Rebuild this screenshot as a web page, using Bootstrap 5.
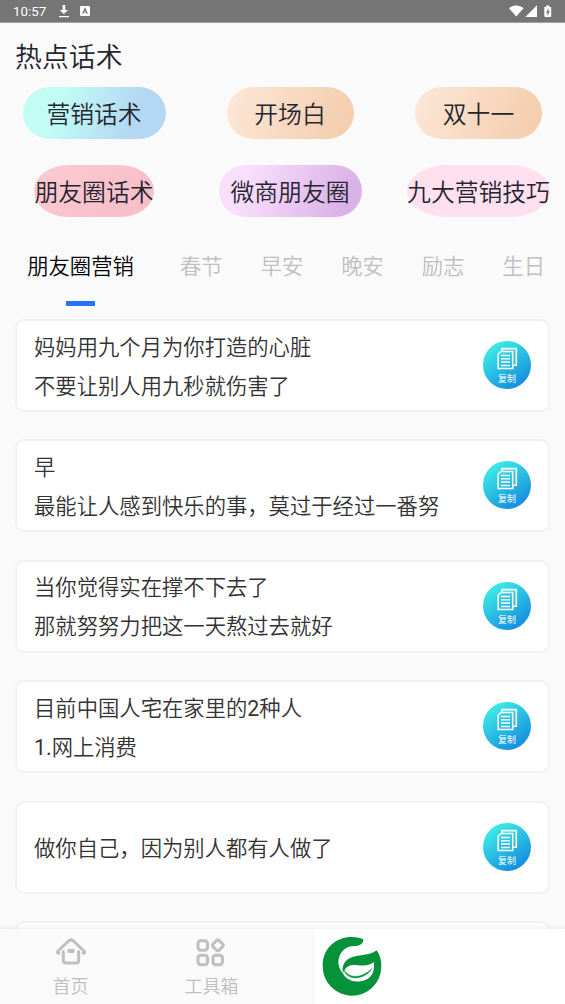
<!DOCTYPE html>
<html lang="zh-CN">
<head>
<meta charset="utf-8">
<meta name="viewport" content="width=device-width, initial-scale=1">
<title>热点话术</title>
<link href="https://cdn.jsdelivr.net/npm/bootstrap@5.3.0/dist/css/bootstrap.min.css" rel="stylesheet">
<style>
body{font-family:Roboto,"Noto Sans CJK SC",sans-serif;font-weight:350;background:#fafafa;color:#24252f}
.phone{height:1004px}
.status{height:23px;background:#757575;border-bottom:1px solid #a2a2a2;color:#fff;font-size:13.3px;font-weight:400;line-height:23px;padding-left:13px;padding-right:12px}
.page-title{font-size:26.9px;font-weight:350;line-height:40px;margin:15px 0 0 15px;height:49px}
.topics{display:grid;grid-template-columns:188px 204px 173px;row-gap:26px;justify-items:center}
.pill{height:52px;width:143px;border-radius:27px/26px;font-size:23.8px;line-height:56px;text-align:center;white-space:nowrap;display:flex;justify-content:center}
.pill.mid{width:127px}
.aqua{background:linear-gradient(110deg,#c1fdf4 25%,#b4d8f3 75%)}
.peach{background:linear-gradient(110deg,#fce6d6 5%,#f4ceae 90%)}
.rose{background:linear-gradient(135deg,#fccad3,#f7bdc7);width:120px;border-radius:34px/26px}
.lilac{background:linear-gradient(110deg,#f8dffb 20%,#dbb2e8 85%)}
.blush{background:#ffe0ef;border-radius:40px/26px}
.tabs{height:90px;font-size:21.33px;line-height:32px;padding-top:34px;color:#bfbfbf}
.tabs a{width:80.6px;flex:none;text-align:center;color:inherit;text-decoration:none;position:relative;height:56px}
.tabs a.active{width:161px;color:#000}
.tabs a.active::after{content:"";position:absolute;left:66px;top:50px;width:29px;height:5px;background:#2672fb}
.feed{padding:12px 15px 0;gap:27.4px;height:622px}
.entry{height:93px;flex:none;border:2px solid #f2f2f2;border-radius:9px;background:#fff;padding:0 17px;color:#333;font-size:21.33px;line-height:39px}
.entry>div{padding-top:2px}
.copy{width:48px;height:48px;margin-top:-1px;flex:none;border:0;padding:0;background:none;line-height:0}
.dock{height:75px;flex:none;box-shadow:0 -1px 5px rgba(0,0,0,.08);position:relative;background:#fff}
.dock-nav{width:315px;background:#fafafa;color:#bfbfbf;font-size:18px;line-height:26px}
.dock-nav a{width:141px;color:inherit;text-decoration:none;padding-top:7px}
.dock-nav svg{margin-bottom:6px}
</style>
</head>
<body>
<svg width="0" height="0" class="position-absolute" aria-hidden="true">
<defs>
<linearGradient id="cg" x1=".2" y1=".05" x2=".8" y2=".95"><stop offset="0" stop-color="#3eeee5"/><stop offset="1" stop-color="#148ae0"/></linearGradient>
<symbol id="copy" viewBox="0 0 48 48">
<circle cx="24" cy="24" r="24" fill="url(#cg)"/>
<g fill="none" stroke="#fff" stroke-width="1.6">
<path d="M19 10V7.600H33.300V24.300H30.500"/>
<path d="M15.200 13.200L18 10.500H29.700V27.500H15.200Z"/>
<path d="M18 14.500H27M18 17.800H27M18 21.100H27M18 24.400H27" stroke-width="1.500"/>
</g>
<text x="24" y="40.600" text-anchor="middle" font-size="9" font-weight="400" fill="#fff" font-family="'Noto Sans CJK SC',sans-serif">复制</text>
</symbol>
</defs>
</svg>
<div class="phone d-flex flex-column overflow-hidden">
<header class="status d-flex align-items-center flex-shrink-0">
<span>10:57</span>
<svg style="margin-left:12px" width="12" height="14" viewBox="0 0 12 14"><path d="M4.600 1H7.200V6H10L5.900 10L1.800 6H4.600ZM1 12H11V13.200H1Z" fill="#fff"/></svg>
<svg style="margin-left:10px" width="10" height="12" viewBox="0 0 10 12"><rect x="0" y="1" width="10" height="10" rx="1.300" fill="#fff"/><path d="M2.800 8.800L5 3.500L7.200 8.800M3.600 7H6.400" fill="none" stroke="#757575" stroke-width="1.200"/></svg>
<svg class="ms-auto" width="44" height="16" viewBox="0 0 44 16"><path d="M0 5.200C4 1.500 10.500 1.500 14.500 5.200L7.300 13.500Z M28 2.300V14H16.300Z M35.300 4H37.200V2.400H40.300V4H42.200V13Q42.200 14 41.200 14H36.300Q35.300 14 35.300 13Z" fill="#fff"/><path d="M39.500 5L37 9.700H38.500V13L40.800 8.400H39.500Z" fill="#757575"/></svg>
</header>
<h1 class="page-title flex-shrink-0">热点话术</h1>
<section class="topics flex-shrink-0">
<div class="pill aqua">营销话术</div><div class="pill mid peach">开场白</div><div class="pill mid peach">双十一</div>
<div class="pill rose">朋友圈话术</div><div class="pill lilac">微商朋友圈</div><div class="pill blush">九大营销技巧</div>
</section>
<nav class="tabs d-flex flex-shrink-0">
<a class="active" href="#">朋友圈营销</a><a href="#">春节</a><a href="#">早安</a><a href="#">晚安</a><a href="#">励志</a><a href="#">生日</a>
</nav>
<main class="feed d-flex flex-column overflow-hidden">
<article class="entry d-flex align-items-center justify-content-between"><div>妈妈用九个月为你打造的心脏<br>不要让别人用九秒就伤害了</div><button class="copy" aria-label="复制"><svg width="48" height="48"><use href="#copy"/></svg></button></article>
<article class="entry d-flex align-items-center justify-content-between"><div>早<br>最能让人感到快乐的事，莫过于经过一番努</div><button class="copy" aria-label="复制"><svg width="48" height="48"><use href="#copy"/></svg></button></article>
<article class="entry d-flex align-items-center justify-content-between"><div>当你觉得实在撑不下去了<br>那就努努力把这一天熬过去就好</div><button class="copy" aria-label="复制"><svg width="48" height="48"><use href="#copy"/></svg></button></article>
<article class="entry d-flex align-items-center justify-content-between"><div>目前中国人宅在家里的<span class="fw-normal">2</span>种人<br><span class="fw-normal">1.</span>网上消费</div><button class="copy" aria-label="复制"><svg width="48" height="48"><use href="#copy"/></svg></button></article>
<article class="entry d-flex align-items-center justify-content-between"><div>做你自己，因为别人都有人做了</div><button class="copy" aria-label="复制"><svg width="48" height="48"><use href="#copy"/></svg></button></article>
<article class="entry"></article>
</main>
<footer class="dock d-flex">
<div class="dock-nav d-flex">
<a href="#" class="d-flex flex-column align-items-center"><svg width="32" height="32" viewBox="0 0 32 32" fill="none" stroke="#bfbfbf" stroke-width="3" stroke-linecap="round" stroke-linejoin="round" class="flex-shrink-0"><path d="M3.700 17.300Q1.500 17 3 15L13.500 5Q16 2.800 18.500 5L29 15Q30.500 17 28.300 17.300"/><path d="M8.300 15.500V24Q8.300 27 11 27H21Q23.700 27 23.700 24V15.500"/><path d="M13.200 13.700H18.800V15.200Q18.800 16.200 17.800 16.200H14.200Q13.200 16.200 13.200 15.200Z" fill="#bfbfbf" stroke-width="1.600"/></svg>首页</a>
<a href="#" class="d-flex flex-column align-items-center"><svg width="32" height="32" viewBox="1 0 32 32" fill="none" stroke="#bfbfbf" stroke-width="3" stroke-linejoin="round" class="flex-shrink-0"><rect x="3" y="4.800" width="9.500" height="9.500" rx="2.700"/><rect x="3" y="19.300" width="9.500" height="9.500" rx="2.700"/><rect x="18" y="19.300" width="9.500" height="9.500" rx="2.700"/><rect x="18.500" y="5" width="8.700" height="8.700" rx="2.300" transform="rotate(45 22.850 9.350)"/></svg>工具箱</a>
</div>
<svg width="75" height="75" viewBox="0 0 75 75"><path d="M48.500 10.500C31 3 7.700 13 7.700 37A29.300 29.300 0 0 0 66.300 38C66.700 32 65 26 61.700 21.300C55 27 43 25 34 29.500C28 33 25.500 41 29.500 46C25 42 22 35 24 28.500C27 19 35 16.500 41 17C45.500 16.500 48 14.500 48.500 10.500Z" fill="#059239"/><path d="M29.500 41C33 34.500 40 35.800 46 36.400C52 36.800 56 35.500 58.800 33C60 42 57 50 47 52C38 54 30 50 28 44Z" fill="#fff"/><path d="M29 41C34 49.500 46 50 57 39.500C49 52 32 51.500 29 41Z" fill="#059239" stroke="#059239" stroke-width=".5"/></svg>
</footer>
</div>
<script src="https://cdn.jsdelivr.net/npm/bootstrap@5.3.0/dist/js/bootstrap.bundle.min.js"></script>
</body>
</html>
